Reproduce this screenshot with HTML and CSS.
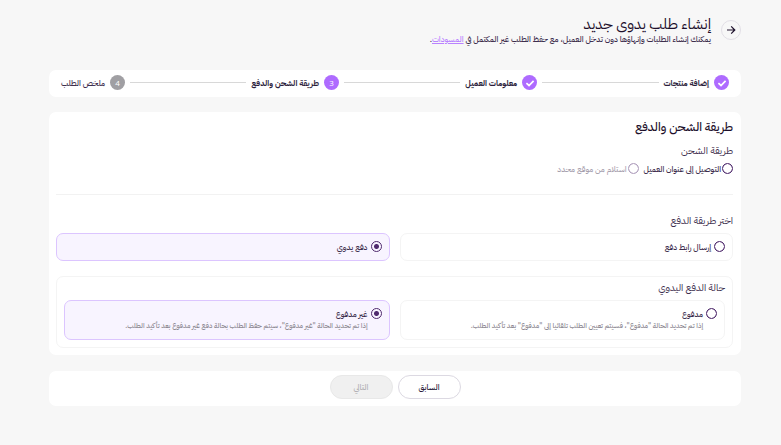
FILE: index.html
```html
<!DOCTYPE html>
<html lang="ar" dir="rtl">
<head>
    <meta charset="UTF-8">
    <meta name="viewport" content="width=device-width, initial-scale=1.0">
    <title>إنشاء طلب يدوى جديد</title>
    <link rel="stylesheet" href="styles.css">
</head>
<body>
    <header class="page-header">
        <button type="button" class="back-btn" aria-label="رجوع">
            <svg width="10" height="10" viewBox="0 0 10 10"><path d="M1 5h7.6M5.2 1.4L8.8 5L5.2 8.6"/></svg>
        </button>
        <div class="page-heading">
            <h1>إنشاء طلب يدوى جديد</h1>
            <p>يمكنك إنشاء الطلبات وإنهاؤها دون تدخل العميل، مع حفظ الطلب غير المكتمل في <a href="#">المسودات</a>.</p>
        </div>
    </header>

    <main>
        <ol class="card stepper">
            <li class="step">
                <span class="step-icon"><svg width="10" height="10" viewBox="0 0 10 10"><path d="M1.4 5.2L4 7.5L8.6 2.8"/></svg></span>
                <span class="step-label">إضافة منتجات</span>
            </li>
            <li class="step">
                <span class="step-icon"><svg width="10" height="10" viewBox="0 0 10 10"><path d="M1.4 5.2L4 7.5L8.6 2.8"/></svg></span>
                <span class="step-label">معلومات العميل</span>
            </li>
            <li class="step">
                <span class="step-icon">3</span>
                <span class="step-label">طريقة الشحن والدفع</span>
            </li>
            <li class="step pending">
                <span class="step-icon">4</span>
                <span class="step-label">ملخص الطلب</span>
            </li>
        </ol>

        <form class="card checkout">
            <h2>طريقة الشحن والدفع</h2>
            <h3>طريقة الشحن</h3>
            <div class="shipping">
                <label><input type="radio" name="shipping">التوصيل إلى عنوان العميل</label>
                <label class="disabled"><input type="radio" name="shipping" disabled>استلام من موقع محدد</label>
            </div>
            <hr>
            <h3>اختر طريقة الدفع</h3>
            <div class="options">
                <label class="option"><input type="radio" name="payment"><span>إرسال رابط دفع</span></label>
                <label class="option selected"><input type="radio" name="payment" checked><span>دفع يدوي</span></label>
            </div>
            <section class="status">
                <h3>حالة الدفع اليدوي</h3>
                <div class="options">
                    <label class="option">
                        <input type="radio" name="status">
                        <span>مدفوع<small>إذا تم تحديد الحالة "مدفوع"، فسيتم تعيين الطلب تلقائيا إلى "مدفوع" بعد تأكيد الطلب.</small></span>
                    </label>
                    <label class="option selected">
                        <input type="radio" name="status" checked>
                        <span>غير مدفوع<small>إذا تم تحديد الحالة "غير مدفوع"، سيتم حفظ الطلب بحالة دفع غير مدفوع بعد تأكيد الطلب.</small></span>
                    </label>
                </div>
            </section>
        </form>

        <div class="card actions">
            <button type="button" class="btn">السابق</button>
            <button type="button" class="btn" disabled>التالي</button>
        </div>
    </main>
</body>
</html>
```
FILE: styles.css
```css
* {
    box-sizing: border-box;
}
body {
    margin: 0;
    padding: 15px 40px 39px 49px;
    background-color: #f7f7f7;
    color: #3d2e4d;
    font-family: "IBM Plex Sans Arabic", "Noto Sans Arabic", "Noto Sans", "DejaVu Sans", sans-serif;
    font-size: 8px;
    font-weight: 500;
    line-height: 12px;
}
h1, h2, h3, p {
    margin: 0;
}
.page-header {
    display: flex;
    align-items: flex-start;
    gap: 10px;
    height: 55px;
}
.back-btn {
    display: flex;
    align-items: center;
    justify-content: center;
    width: 20px;
    height: 20px;
    margin-top: 5px;
    padding: 0;
    border: 1px solid #e2dfe6;
    border-radius: 50%;
    background: none;
}
.back-btn svg {
    fill: none;
    stroke: #1d0f2b;
    stroke-width: 1.2;
}
.page-heading h1 {
    color: #1d0f2b;
    font-size: 15px;
    font-weight: 400;
    line-height: 18px;
}
.page-heading a {
    color: #b983ff;
}
.card {
    border-radius: 7px;
    background-color: #fff;
}
.stepper {
    display: flex;
    align-items: center;
    gap: 5px;
    margin: 0 0 15px;
    padding: 5px 12px 7px;
    list-style: none;
}
.step {
    display: flex;
    flex: 1 1 auto;
    align-items: center;
    gap: 5px;
    color: #2b1d3a;
    font-weight: 700;
    white-space: nowrap;
}
.step:last-child {
    flex: none;
}
.step:not(:last-child)::after {
    content: "";
    flex: 1;
    height: 1px;
    background-color: #d8d8d8;
}
.step-icon {
    display: flex;
    align-items: center;
    justify-content: center;
    width: 15px;
    height: 15px;
    border-radius: 50%;
    background-color: #ae6bff;
    color: #fff;
    font-family: "Open Sans", sans-serif;
    font-weight: 400;
}
.step-icon svg {
    fill: none;
    stroke: #fff;
    stroke-width: 1.7;
}
.step.pending {
    color: #3d2e4d;
    font-weight: 500;
}
.pending .step-icon {
    background-color: #a09fa3;
}
.checkout {
    padding: 8px 8px 7px 7px;
}
h2 {
    color: #1d0f2b;
    font-size: 12px;
    font-weight: 500;
    line-height: 14px;
}
h3 {
    font-size: 10px;
    font-weight: 400;
    line-height: 14px;
}
h2 + h3 {
    margin-top: 10px;
}
input[type="radio"] {
    appearance: none;
    flex: none;
    width: 11px;
    height: 11px;
    margin: 0 0 1px 1px;
    border: 1px solid #4f2a6d;
    border-radius: 50%;
    background: radial-gradient(circle, transparent 4px, #4f2a6d 5px);
}
input[type="radio"]:checked {
    background: radial-gradient(circle, #4f2a6d 2px, transparent 3px);
}
.shipping {
    display: flex;
    gap: 5px;
    margin-top: 5px;
}
.shipping label {
    display: flex;
}
.disabled {
    opacity: 0.45;
}
hr {
    margin: 19px 0;
    border: 0;
    border-top: 1px solid #f2f2f2;
}
.options {
    display: grid;
    grid-template-columns: 1fr 1fr;
    gap: 10px;
    margin-top: 5px;
}
.option {
    display: flex;
    align-items: flex-start;
    gap: 2px;
    padding: 7px;
    border: 1px solid #f4f4f4;
    border-radius: 7px;
}
.selected {
    border-color: #dcc5ff;
    background-color: #f8f4ff;
}
.option small {
    display: block;
    color: #8d8992;
    font-size: 7px;
    line-height: 12px;
}
.status {
    margin-top: 15px;
    padding: 4px 7px 7px;
    border: 1px solid #f4f4f4;
    border-radius: 7px;
}
.actions {
    display: flex;
    justify-content: center;
    gap: 5px;
    margin-top: 16px;
    padding: 4px 4px 7px;
}
.btn {
    width: 63px;
    height: 24px;
    padding: 0;
    border: 1px solid #dcd9e2;
    border-radius: 12px;
    background-color: #fff;
    color: #2b1d3a;
    font: inherit;
}
.btn:disabled {
    border-color: #e8e8e8;
    background-color: #f0f0f0;
    color: #b3b1b5;
}
```
